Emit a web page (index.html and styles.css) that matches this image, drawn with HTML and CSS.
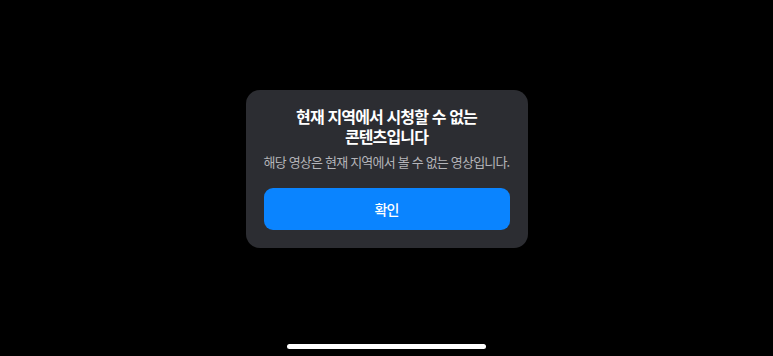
FILE: index.html
```html
<!DOCTYPE html>
<html lang="ko">
<head>
<meta charset="utf-8">
<title>알림</title>
<link rel="stylesheet" href="styles.css">
</head>
<body>
<div class="screen">
  <div class="dialog">
    <h1 class="title">현재 지역에서 시청할 수 없는<br>콘텐츠입니다</h1>
    <p class="message">해당 영상은 현재 지역에서 볼 수 없는 영상입니다.</p>
    <button class="confirm" type="button">확인</button>
  </div>
  <div class="home-indicator"></div>
</div>
</body>
</html>
```
FILE: styles.css
```css
html, body {
  margin: 0;
  padding: 0;
  background: #000;
}
body {
  font-family: "Noto Sans CJK KR", "Noto Sans", sans-serif;
  color: #fff;
}
.screen {
  width: 773px;
  height: 356px;
  display: flex;
  flex-direction: column;
  align-items: center;
}
.dialog {
  margin-top: 90px;
  width: 282px;
  box-sizing: border-box;
  padding: 16px 18px 18px;
  background: #2c2d32;
  border-radius: 14px;
  display: flex;
  flex-direction: column;
  align-items: stretch;
  text-align: center;
}
.title {
  margin: 0;
  font-size: 16px;
  line-height: 20px;
  font-weight: 700;
  letter-spacing: -0.85px;
  color: #fff;
}
.message {
  margin: 7px 0 0;
  font-size: 13px;
  line-height: 17px;
  letter-spacing: -0.8px;
  color: #b4b4b9;
  white-space: nowrap;
}
.confirm {
  margin-top: 18px;
  height: 42px;
  border: 0;
  border-radius: 9px;
  background: #0a84ff;
  color: #fff;
  font-family: inherit;
  font-size: 14px;
  font-weight: 500;
  letter-spacing: -1px;
  padding: 0;
}
.home-indicator {
  margin-top: auto;
  margin-bottom: 7px;
  width: 199px;
  height: 5px;
  border-radius: 3px;
  background: #fff;
}
```
